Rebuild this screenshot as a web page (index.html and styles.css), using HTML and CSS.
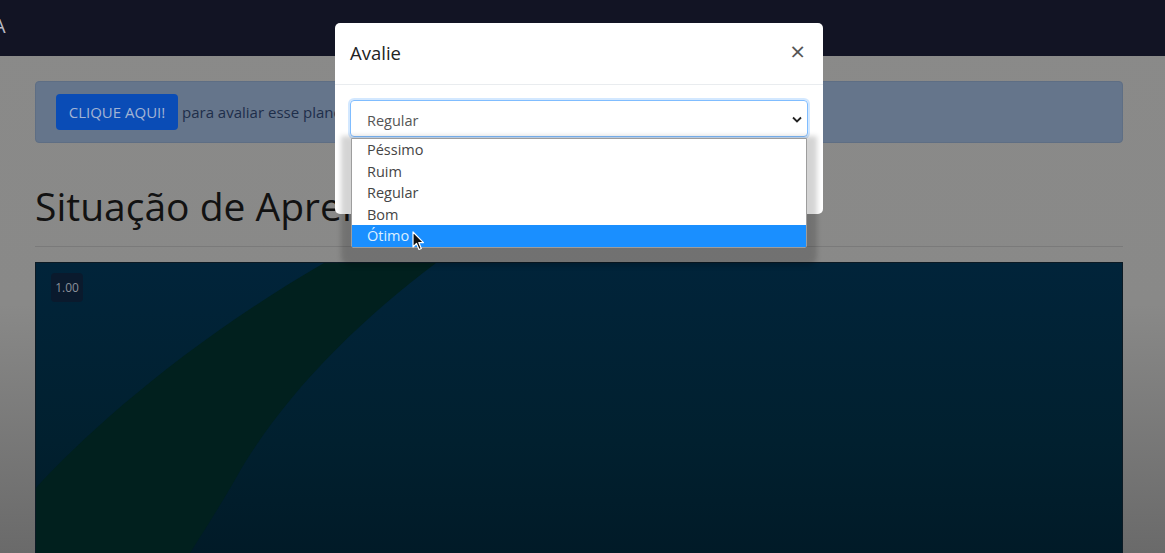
FILE: index.html
```html
<!DOCTYPE html>
<html lang="pt-BR">
<head>
<meta charset="utf-8">
<title>Avalie</title>
<link rel="stylesheet" href="styles.css">
</head>
<body>
  <header class="navbar"><span class="brand">A</span></header>
  <main class="page">
    <div class="alert">
      <button class="btn-primary">CLIQUE AQUI!</button>
      <span class="alert-text">para avaliar esse plano de aula</span>
    </div>
    <h1 class="title">Situação de Aprendizagem</h1>
    <hr class="rule">
    <div class="stage">
      <svg class="arc" viewBox="0 0 1088 300" width="1088" height="300">
        <path d="M 0 225 C 50 170 150 80 288 0 L 400 0 C 320 60 245 135 200 215 C 180 250 160 280 148 300 L 0 300 Z" fill="#01201e"/>
      </svg>
      <span class="badge">1.00</span>
    </div>
  </main>

  <div class="modal">
    <div class="modal-header">
      <h5 class="modal-title">Avalie</h5>
      <span class="close">&times;</span>
    </div>
    <div class="modal-body">
      <div class="select">
        <span>Regular</span>
        <svg class="chev" width="10" height="7" viewBox="0 0 10 7"><path d="M1 1.5 L5 5.5 L9 1.5" fill="none" stroke="#222" stroke-width="1.8"/></svg>
      </div>
    </div>
  </div>

  <ul class="dropdown">
    <li>Péssimo</li>
    <li>Ruim</li>
    <li>Regular</li>
    <li>Bom</li>
    <li class="active">Ótimo</li>
  </ul>

  <svg class="cursor" width="13" height="20" viewBox="0 0 13 20">
    <path d="M1 1 L1 16 L4.5 12.5 L7 18.5 L9.3 17.5 L6.8 11.6 L11.5 11.6 Z" fill="#111" stroke="#fff" stroke-width="1.2" stroke-linejoin="round"/>
  </svg>
</body>
</html>
```

FILE: styles.css
```css
* { box-sizing: border-box; }

html, body {
  margin: 0;
  height: 100%;
}

body {
  font-family: "Open Sans", "Noto Sans", sans-serif;
  background: linear-gradient(180deg, #8a8a89 0%, #898988 55%, #6a6a6a 100%);
  overflow: hidden;
  position: relative;
}

.navbar {
  height: 56px;
  background: #121424;
  display: flex;
  align-items: center;
}

.brand {
  color: #b8bac4;
  font-size: 20px;
  margin-left: -7px;
  margin-top: -6px;
}

.page {
  padding: 25px 42px 0 35px;
}

.alert {
  height: 62px;
  background: #65758b;
  border: 1px solid #5e6e84;
  border-radius: 4px;
  display: flex;
  align-items: center;
  padding-left: 20px;
  gap: 4px;
}

.btn-primary {
  font-family: inherit;
  font-size: 15px;
  color: #a2b4d4;
  background: #0a4cb6;
  border: none;
  border-radius: 4px;
  height: 36px;
  width: 122px;
  padding: 0;
}

.alert-text {
  color: #1e2e4a;
  font-size: 15px;
}

.title {
  margin: 39px 0 0;
  font-weight: 400;
  font-size: 39px;
  line-height: 48px;
  color: #121212;
  white-space: nowrap;
}

.rule {
  margin: 16px 0 15px;
  border: 0;
  border-top: 1px solid #7a7a7a;
}

.stage {
  position: relative;
  height: 300px;
  background: linear-gradient(180deg, #01243a 0%, #01202f 60%, #011a27 100%);
  border: 1px solid #0c1a24;
  overflow: hidden;
}

.arc {
  position: absolute;
  left: 0;
  top: 0;
}

.badge {
  position: absolute;
  left: 15px;
  top: 10px;
  width: 32px;
  height: 29px;
  border-radius: 4px;
  background: #0a1a2d;
  color: #8b919a;
  font-size: 12px;
  display: flex;
  align-items: center;
  justify-content: center;
}

.modal {
  position: absolute;
  left: 335px;
  top: 23px;
  width: 488px;
  height: 191px;
  background: #fff;
  border-radius: 5px;
}

.modal-header {
  height: 62px;
  border-bottom: 1px solid #e9ecef;
  display: flex;
  align-items: center;
  justify-content: space-between;
  padding: 0 18px 2px 15px;
}

.modal-title {
  margin: 0;
  font-weight: 400;
  font-size: 18.5px;
  color: #222;
}

.close {
  font-size: 26px;
  font-weight: 400;
  color: #555;
  line-height: 1;
  margin-top: -3px;
}

.modal-body {
  padding: 15px 15px;
}

.select {
  height: 37px;
  border: 1px solid #80bdff;
  border-radius: 4px;
  box-shadow: 0 0 0 2px rgba(128, 189, 255, 0.35);
  display: flex;
  align-items: center;
  justify-content: space-between;
  padding: 3px 5px 0 16px;
  color: #555;
  font-size: 14.5px;
}

.chev {
  margin-top: -2px;
}

.dropdown {
  position: absolute;
  left: 351px;
  top: 138px;
  width: 456px;
  margin: 0;
  padding: 0;
  list-style: none;
  background: #fff;
  border: 1px solid #9d9d9d;
  box-shadow: 0 8px 5px 10px rgba(0, 0, 0, 0.17);
  border-radius: 0 0 3px 3px;
}

.dropdown li {
  height: 21.6px;
  line-height: 21.6px;
  padding-left: 15px;
  font-size: 14.5px;
  color: #454545;
}

.dropdown li.active {
  background: #1a8fff;
  color: #dcefff;
}

.cursor {
  position: absolute;
  left: 412px;
  top: 231px;
}
```
